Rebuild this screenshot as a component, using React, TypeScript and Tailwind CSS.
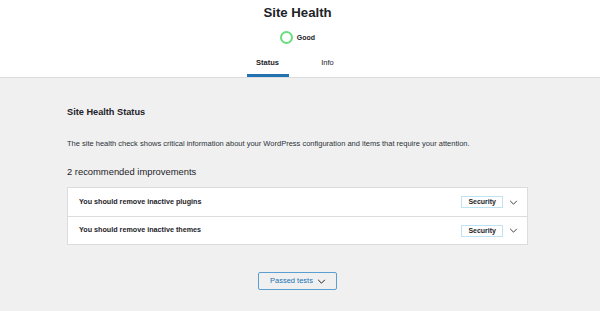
import React from 'react';

const font = { fontFamily: '"Liberation Sans", Arial, sans-serif' };

const Chevron: React.FC<{ className?: string }> = ({ className }) => (
  <svg viewBox="0 0 10 6" className={className} fill="none" stroke="currentColor" strokeWidth="1.2">
    <path d="M1 1l4 4 4-4" />
  </svg>
);

const issues = ['You should remove inactive plugins', 'You should remove inactive themes'];

export default function App() {
  return (
    <div className="min-h-[311px] bg-[#f0f0f1] text-[#1d2327]" style={font}>
      <div className="bg-white border-b border-[#dcdcde]">
        <div className="pr-[5px]">
          <h1 className="pt-[5px] text-center text-[13.2px] font-bold leading-[16px]">Site Health</h1>
          <div className="mt-[10px] flex h-[13px] items-center justify-center gap-[4px]">
            <span className="h-[13px] w-[13px] rounded-full border-2 border-[#68de7c]" />
            <span className="text-[7px] font-bold leading-[12px]">Good</span>
          </div>
          <div className="mt-[13px] flex justify-center gap-[18px]">
            <div className="w-[42px] border-b-[3px] border-[#2271b1] pb-[5px] text-center text-[7.5px] font-bold leading-[12px]">
              Status
            </div>
            <div className="w-[42px] pb-[8px] text-center text-[7.5px] leading-[12px]">Info</div>
          </div>
        </div>
      </div>

      <div className="pr-[5px]">
        <div className="mx-auto w-[461px] pt-[28px]">
          <h2 className="text-[9.2px] font-bold leading-[12px]">Site Health Status</h2>
          <p className="mt-[20px] text-[7.5px] leading-[12px] text-[#2c3338]">
            The site health check shows critical information about your WordPress configuration and items that require your attention.
          </p>
          <h3 className="mt-[16px] text-[9.4px] leading-[12px]">2 recommended improvements</h3>
          <div className="mt-[9px] bg-white border border-[#dcdcde]">
            {issues.map((t, i) => (
              <div
                key={t}
                className={`flex h-[28px] items-center pl-[11px] pr-[9px] ${i > 0 ? 'border-t border-[#dcdcde]' : ''}`}
              >
                <span className="flex-1 text-[7.2px] font-bold">{t}</span>
                <span className="border border-[#bfe3f2] px-[6px] text-[7px] font-bold leading-[10px]">
                  Security
                </span>
                <Chevron className="ml-[6px] h-[5px] w-[9px] text-[#3c434a]" />
              </div>
            ))}
          </div>
          <div className="mt-[27px] flex justify-center">
            <button className="flex h-[18px] items-center gap-[4px] rounded-[2px] border border-[#5b9fd1] pl-[11px] pr-[10px] text-[7.5px] text-[#2271b1]">
              Passed tests
              <Chevron className="h-[5px] w-[9px] text-[#1d2327]" />
            </button>
          </div>
        </div>
      </div>
    </div>
  );
}
